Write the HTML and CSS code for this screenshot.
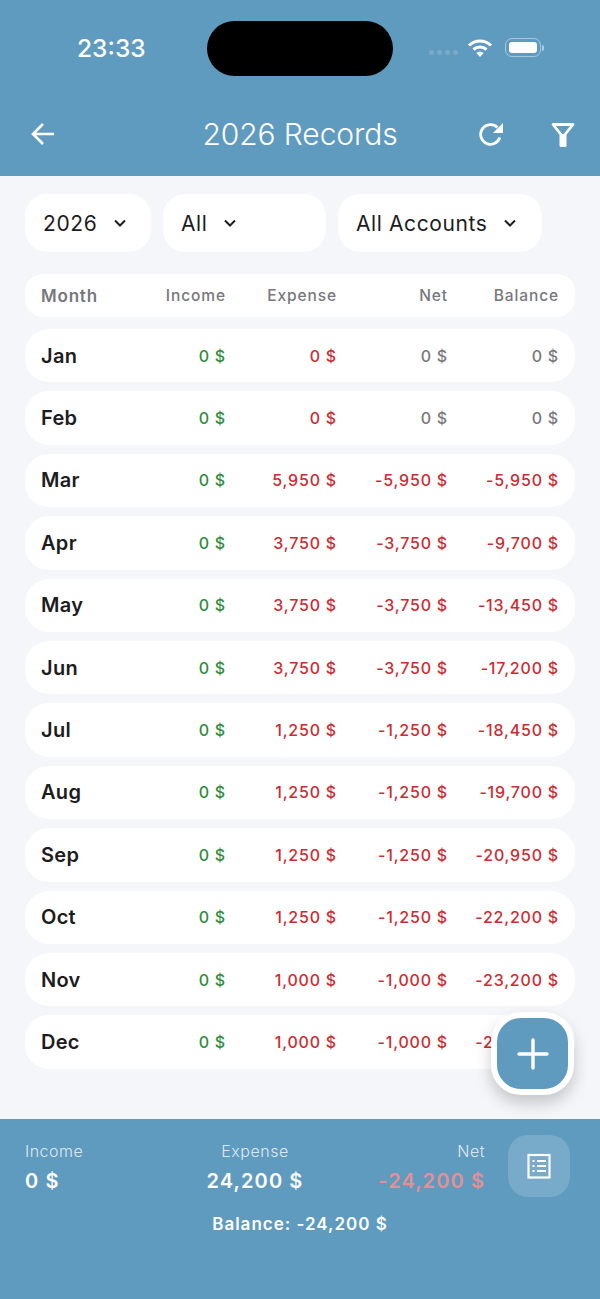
FILE: index.html
```html
<!DOCTYPE html>
<html lang="en">
<head>
  <meta charset="UTF-8">
  <title>2026 Records</title>
  <link rel="stylesheet" href="styles.css">
</head>
<body>

<div class="screen">
  <header class="topbar">
    <div class="status">
      <span class="time">23:33</span>
      <div class="island"></div>
      <div class="status-icons">
        <div class="dots"><i></i><i></i><i></i><i></i></div>
        <svg class="wifi" width="26" height="20" viewBox="0 0 26 20">
          <path d="M2 7.500a16 16 0 0 1 22 0" fill="none" stroke="#fff" stroke-width="3"/>
          <path d="M6.500 11.500a10 10 0 0 1 13 0" fill="none" stroke="#fff" stroke-width="3"/>
          <path d="M13 19l-3.600-4a5 5 0 0 1 7.200 0z" fill="#fff"/>
        </svg>
        <div class="battery"><div class="battery-fill"></div></div>
        <div class="battery-tip"></div>
      </div>
    </div>
    <nav class="navbar">
      <svg class="back" width="28" height="28" viewBox="0 0 28 28">
        <path d="M25 14H5M14 4L4 14l10 10" fill="none" stroke="#fff" stroke-width="2.600"/>
      </svg>
      <h1>2026 Records</h1>
      <svg class="refresh" width="24" height="24" viewBox="0 0 24 24">
        <path d="M20.800 15.500a9.800 9.800 0 1 1-2.400-10" fill="none" stroke="#fff" stroke-width="2.800"/>
        <path d="M24 1v10h-10z" fill="#fff"/>
      </svg>
      <svg class="filter" width="24" height="25" viewBox="0 0 24 25">
        <path d="M2 2.500h20L12 15z" fill="none" stroke="#fff" stroke-width="2.800" stroke-linejoin="round"/>
        <rect x="8.500" y="12" width="7" height="13" rx="1.500" fill="#fff"/>
      </svg>
    </nav>
  </header>

  <main class="content">
    <div class="filters">
      <div class="pick pick-year">2026 <svg class="chev" width="14" height="14" viewBox="0 0 14 14"><path d="M2 4.500l5 5 5-5" fill="none" stroke="#1c1c1e" stroke-width="2"/></svg></div>
      <div class="pick pick-type">All <svg class="chev" width="14" height="14" viewBox="0 0 14 14"><path d="M2 4.500l5 5 5-5" fill="none" stroke="#1c1c1e" stroke-width="2"/></svg></div>
      <div class="pick pick-acc">All Accounts <svg class="chev" width="14" height="14" viewBox="0 0 14 14"><path d="M2 4.500l5 5 5-5" fill="none" stroke="#1c1c1e" stroke-width="2"/></svg></div>
    </div>

    <div class="head-row">
      <span class="month-head">Month</span>
      <span>Income</span>
      <span>Expense</span>
      <span>Net</span>
      <span>Balance</span>
    </div>

    <div class="rows">
      <div class="row"><span class="month">Jan</span><span class="green">0 $</span><span class="red">0 $</span><span class="grey">0 $</span><span class="grey">0 $</span></div>
      <div class="row"><span class="month">Feb</span><span class="green">0 $</span><span class="red">0 $</span><span class="grey">0 $</span><span class="grey">0 $</span></div>
      <div class="row"><span class="month">Mar</span><span class="green">0 $</span><span class="red">5,950 $</span><span class="red">-5,950 $</span><span class="red">-5,950 $</span></div>
      <div class="row"><span class="month">Apr</span><span class="green">0 $</span><span class="red">3,750 $</span><span class="red">-3,750 $</span><span class="red">-9,700 $</span></div>
      <div class="row"><span class="month">May</span><span class="green">0 $</span><span class="red">3,750 $</span><span class="red">-3,750 $</span><span class="red">-13,450 $</span></div>
      <div class="row"><span class="month">Jun</span><span class="green">0 $</span><span class="red">3,750 $</span><span class="red">-3,750 $</span><span class="red">-17,200 $</span></div>
      <div class="row"><span class="month">Jul</span><span class="green">0 $</span><span class="red">1,250 $</span><span class="red">-1,250 $</span><span class="red">-18,450 $</span></div>
      <div class="row"><span class="month">Aug</span><span class="green">0 $</span><span class="red">1,250 $</span><span class="red">-1,250 $</span><span class="red">-19,700 $</span></div>
      <div class="row"><span class="month">Sep</span><span class="green">0 $</span><span class="red">1,250 $</span><span class="red">-1,250 $</span><span class="red">-20,950 $</span></div>
      <div class="row"><span class="month">Oct</span><span class="green">0 $</span><span class="red">1,250 $</span><span class="red">-1,250 $</span><span class="red">-22,200 $</span></div>
      <div class="row"><span class="month">Nov</span><span class="green">0 $</span><span class="red">1,000 $</span><span class="red">-1,000 $</span><span class="red">-23,200 $</span></div>
      <div class="row"><span class="month">Dec</span><span class="green">0 $</span><span class="red">1,000 $</span><span class="red">-1,000 $</span><span class="red">-24,200 $</span></div>
    </div>

    <button class="fab">
      <svg width="34" height="34" viewBox="0 0 34 34">
        <path d="M17 3v28M3 17h28" stroke="#fff" stroke-width="3.400" stroke-linecap="round"/>
      </svg>
    </button>
  </main>

  <footer class="summary">
    <div class="totals">
      <div class="total total-income">
        <span class="total-label">Income</span>
        <span class="total-value">0 $</span>
      </div>
      <div class="total total-expense">
        <span class="total-label">Expense</span>
        <span class="total-value">24,200 $</span>
      </div>
      <div class="total total-net">
        <span class="total-label">Net</span>
        <span class="total-value negative">-24,200 $</span>
      </div>
      <div class="report-btn">
        <svg width="26" height="26" viewBox="0 0 26 26">
          <rect x="2.500" y="2" width="21" height="22.500" fill="none" stroke="#fff" stroke-width="2.200"/>
          <path d="M6.500 8h2M11 8h9M6.500 13h2M11 13h9M6.500 18h2M11 18h9" stroke="#fff" stroke-width="2.200"/>
        </svg>
      </div>
    </div>
    <p class="balance">Balance: -24,200 $</p>
  </footer>
</div>

</body>
</html>
```

FILE: styles.css
```css
* {
  box-sizing: border-box;
}
body {
  margin: 0;
  font-family: Inter, 'Noto Sans', sans-serif;
  background: #f4f6fa;
}
.screen {
  width: 600px;
  height: 1299px;
  display: flex;
  flex-direction: column;
}

/* top blue area */
.topbar {
  height: 176px;
  background-color: #5f9abf;
  color: #fff;
}
.status {
  height: 97px;
  padding: 21px 0 0 77px;
  display: flex;
  align-items: flex-start;
}
.time {
  width: 130px;
  font-size: 24.500px;
  font-weight: 500;
  line-height: 55px;
}
.island {
  width: 186px;
  height: 55px;
  background: #000;
  border-radius: 28px;
}
.status-icons {
  height: 55px;
  margin-left: 36px;
  display: flex;
  align-items: center;
}
.dots {
  display: flex;
  gap: 3px;
  margin: 7px 9px 0 0;
}
.dots i {
  width: 5px;
  height: 5px;
  border-radius: 50%;
  background: rgba(255, 255, 255, 0.16);
}
.wifi {
  margin-bottom: 2px;
}
.battery {
  width: 36px;
  height: 19px;
  margin: 0 0 2px 12px;
  padding: 3px;
  border: 1px solid rgba(255, 255, 255, 0.45);
  border-radius: 7px;
}
.battery-fill {
  height: 100%;
  background: #fff;
  border-radius: 3px;
}
.battery-tip {
  width: 2px;
  height: 6px;
  margin: 0 0 2px 1px;
  background: rgba(255, 255, 255, 0.5);
  border-radius: 0 2px 2px 0;
}
.navbar {
  height: 79px;
  padding: 0 25px 5px 29px;
  display: flex;
  align-items: center;
}
.navbar h1 {
  margin: 0;
  flex: 1;
  text-align: center;
  font-size: 30px;
  font-weight: 300;
  letter-spacing: -0.1px;
  padding-left: 64px;
}
.refresh {
  margin-right: 48px;
}

/* filters */
.content {
  flex: 1;
  padding: 18px 25px 0;
  position: relative;
}
.filters {
  display: flex;
  gap: 12px;
  margin-bottom: 22px;
}
.pick {
  height: 58px;
  padding-left: 18px;
  background: #fff;
  border-radius: 22px;
  display: flex;
  align-items: center;
  gap: 16px;
  font-size: 21px;
  letter-spacing: 0.6px;
  color: #1c1c1e;
}
.pick-year {
  width: 126px;
}
.pick-type {
  width: 163px;
}
.pick-acc {
  width: 204px;
}

/* table */
.head-row,
.row {
  display: grid;
  grid-template-columns: 1fr repeat(4, 111px);
  align-items: center;
  padding: 0 16px 0 16px;
  background: #fff;
  text-align: right;
}
.head-row {
  height: 43px;
  margin-bottom: 12px;
  border-radius: 18px;
  font-size: 15.500px;
  font-weight: 500;
  letter-spacing: 0.9px;
  color: #77777c;
}
.month-head {
  text-align: left;
  font-size: 17px;
  font-weight: 600;
  letter-spacing: 0.8px;
}
.rows {
  display: flex;
  flex-direction: column;
  gap: 9px;
}
.row {
  height: 53.400px;
  border-radius: 24px;
  font-size: 16px;
  font-weight: 500;
  letter-spacing: 0.8px;
}
.month {
  text-align: left;
  font-size: 20px;
  font-weight: 600;
  letter-spacing: 0.3px;
  color: #1c1c1e;
}
.green {
  color: #2e8b3a;
}
.red {
  color: #cc2b32;
}
.grey {
  color: #77777c;
}

.fab {
  position: absolute;
  left: 491px;
  top: 836px;
  width: 83px;
  height: 83px;
  padding: 0;
  background: #5f9abf;
  border: 6px solid #fff;
  border-radius: 30px;
  box-shadow: 0 8px 16px rgba(0, 0, 0, 0.2);
  display: flex;
  align-items: center;
  justify-content: center;
}

/* bottom summary */
.summary {
  height: 180px;
  padding: 16px 30px 0 25px;
  background-color: #5f9abf;
  color: #fff;
}
.totals {
  display: flex;
  align-items: flex-start;
}
.total {
  display: flex;
  flex-direction: column;
  gap: 8px;
  padding-top: 6px;
}
.total-income {
  width: 230px;
}
.total-expense {
  width: 0;
  align-items: center;
}
.total-net {
  width: 230px;
  align-items: flex-end;
}
.total-label {
  font-size: 16px;
  font-weight: 300;
  line-height: 20px;
  white-space: nowrap;
  letter-spacing: 0.5px;
  color: rgba(255, 255, 255, 0.8);
}
.total-value {
  font-size: 20px;
  font-weight: 600;
  letter-spacing: 1.1px;
  white-space: nowrap;
}
.negative {
  color: #e58f94;
}
.report-btn {
  width: 62px;
  height: 62px;
  margin-left: 23px;
  background: rgba(255, 255, 255, 0.16);
  border-radius: 20px;
  display: flex;
  align-items: center;
  justify-content: center;
}
.balance {
  margin: 17px 0 0;
  padding-left: 5px;
  text-align: center;
  font-size: 17px;
  line-height: 20px;
  font-weight: 600;
  letter-spacing: 1px;
}
```
